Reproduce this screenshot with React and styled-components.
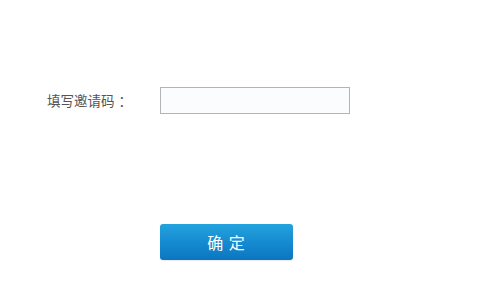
import React, { useState } from 'react'
import styled, { createGlobalStyle } from 'styled-components'

const GlobalStyle = createGlobalStyle`
  html, body {
    margin: 0;
    padding: 0;
    background: #fff;
  }
  body {
    font-family: "Noto Sans CJK SC", "Liberation Sans", sans-serif;
  }
`

const Page = styled.div`
  width: 481px;
  height: 292px;
  box-sizing: border-box;
  padding: 87px 0 0 47px;
  display: flex;
  flex-direction: column;
`

const Row = styled.div`
  display: flex;
  align-items: center;
  height: 27px;
`

const Label = styled.label`
  width: 113px;
  font-size: 13.5px;
  color: #555;
  line-height: 27px;
`

const Colon = styled.span`
  padding-left: 4px;
`

const CodeInput = styled.input`
  width: 190px;
  height: 27px;
  box-sizing: border-box;
  border: 1px solid #b4b4b4;
  background: #fbfcfe;
  padding: 0 6px;
  font-size: 13px;
  outline: none;
  border-radius: 0;
`

const Actions = styled.div`
  display: flex;
  padding-left: 113px;
  margin-top: 110px;
`

const SubmitButton = styled.button`
  width: 133px;
  height: 36px;
  border: none;
  border-radius: 3px;
  background: linear-gradient(to bottom, #23a3de 0%, #1589cf 55%, #0b76c0 100%);
  color: #fff;
  font-family: "Noto Sans CJK SC", sans-serif;
  font-size: 16px;
  letter-spacing: 1px;
  cursor: pointer;
  padding: 0;
  box-shadow: 0 1px 1px rgba(0, 0, 0, 0.08);
`

const App = () => {
  const [code, setCode] = useState('')
  return (
    <>
      <GlobalStyle />
      <Page>
        <Row>
          <Label htmlFor="invite">
            填写邀请码<Colon>：</Colon>
          </Label>
          <CodeInput
            id="invite"
            value={code}
            onChange={e => setCode(e.target.value)}
          />
        </Row>
        <Actions>
          <SubmitButton type="button">确 定</SubmitButton>
        </Actions>
      </Page>
    </>
  )
}

export default App
